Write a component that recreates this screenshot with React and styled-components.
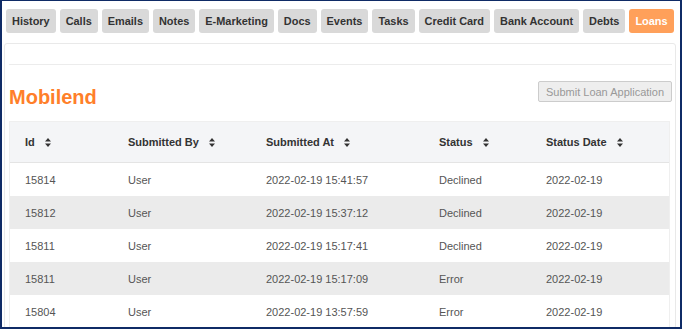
import React from "react";
import styled, { createGlobalStyle } from "styled-components";

const GlobalStyle = createGlobalStyle`
  html, body {
    margin: 0;
    padding: 0;
    background: #ffffff;
  }
  * {
    box-sizing: border-box;
  }
`;

const Frame = styled.div`
  width: 682px;
  height: 329px;
  overflow: hidden;
  border: 2px solid #0f2b66;
  border-top-width: 1px;
  background: #ffffff;
  font-family: "Liberation Sans", Arial, sans-serif;
`;

const TabBar = styled.div`
  display: flex;
  gap: 4px;
  padding: 8px 0 0 4px;
`;

const Tab = styled.div`
  height: 24px;
  padding: 0 6px;
  display: flex;
  align-items: center;
  border-radius: 3px;
  font-size: 10.93px;
  font-weight: bold;
  color: ${(p) => (p.$active ? "#ffffff" : "#333333")};
  background: ${(p) => (p.$active ? "#ffa05a" : "#d9d9d9")};
`;

const Panel = styled.div`
  margin: 10px 4px 0 2px;
  border: 1px solid #e9e9e9;
  border-radius: 3px;
  padding: 20px 5px 0 4px;
`;

const Divider = styled.div`
  height: 1px;
  background: #ececec;
  margin-right: -2px;
`;

const TitleRow = styled.div`
  display: flex;
  justify-content: space-between;
  align-items: flex-start;
  margin-top: 17px;
  height: 39px;
`;

const Title = styled.h2`
  margin: 3px 0 0;
  font-size: 20px;
  font-weight: bold;
  color: #ff7f2a;
  line-height: 24px;
`;

const SubmitButton = styled.button`
  height: 21px;
  margin: -1px -2px 0 0;
  padding: 0 7px;
  border: 1px solid #cccccc;
  border-radius: 2px;
  background: #eeeeee;
  color: #999999;
  font-family: "Liberation Sans", Arial, sans-serif;
  font-size: 11px;
`;

const Table = styled.div`
  border: 1px solid #efefef;
  border-bottom: none;
`;

const Row = styled.div`
  display: grid;
  grid-template-columns: 103px 138px 173px 107px 1fr;
  align-items: center;
  height: ${(p) => (p.$head ? "41px" : "33px")};
  background: ${(p) => (p.$head ? "#f4f5f7" : p.$striped ? "#ebebeb" : "#ffffff")};
  border-bottom: ${(p) => (p.$head ? "1px solid #e4e4e4" : "none")};
`;

const HeadCell = styled.div`
  display: flex;
  align-items: center;
  gap: 10px;
  padding-left: 15px;
  font-size: 11px;
  font-weight: bold;
  color: #333333;
`;

const Cell = styled.div`
  padding-left: 15px;
  font-size: 11px;
  color: #555555;
`;

const SortIcon = () => (
  <svg width="6" height="9" viewBox="0 0 6 9">
    <path d="M3 0 L6 3.6 L0 3.6 Z M3 9 L6 5.4 L0 5.4 Z" fill="#333333" />
  </svg>
);

const tabs = [
  "History",
  "Calls",
  "Emails",
  "Notes",
  "E-Marketing",
  "Docs",
  "Events",
  "Tasks",
  "Credit Card",
  "Bank Account",
  "Debts",
  "Loans",
];

const columns = ["Id", "Submitted By", "Submitted At", "Status", "Status Date"];

const loans = [
  ["15814", "User", "2022-02-19 15:41:57", "Declined", "2022-02-19"],
  ["15812", "User", "2022-02-19 15:37:12", "Declined", "2022-02-19"],
  ["15811", "User", "2022-02-19 15:17:41", "Declined", "2022-02-19"],
  ["15811", "User", "2022-02-19 15:17:09", "Error", "2022-02-19"],
  ["15804", "User", "2022-02-19 13:57:59", "Error", "2022-02-19"],
];

function App() {
  return (
    <>
      <GlobalStyle />
      <Frame>
        {/* Tabs */}
        <TabBar>
          {tabs.map((t) => (
            <Tab key={t} $active={t === "Loans"}>
              {t}
            </Tab>
          ))}
        </TabBar>

        <Panel>
          <Divider />

          {/* Heading */}
          <TitleRow>
            <Title>Mobilend</Title>
            <SubmitButton>Submit Loan Application</SubmitButton>
          </TitleRow>

          {/* Loans table */}
          <Table>
            <Row $head>
              {columns.map((c) => (
                <HeadCell key={c}>
                  {c}
                  <SortIcon />
                </HeadCell>
              ))}
            </Row>
            {loans.map((row, i) => (
              <Row key={i} $striped={i % 2 === 1}>
                {row.map((v, j) => (
                  <Cell key={j}>{v}</Cell>
                ))}
              </Row>
            ))}
          </Table>
        </Panel>
      </Frame>
    </>
  );
}

export default App;
